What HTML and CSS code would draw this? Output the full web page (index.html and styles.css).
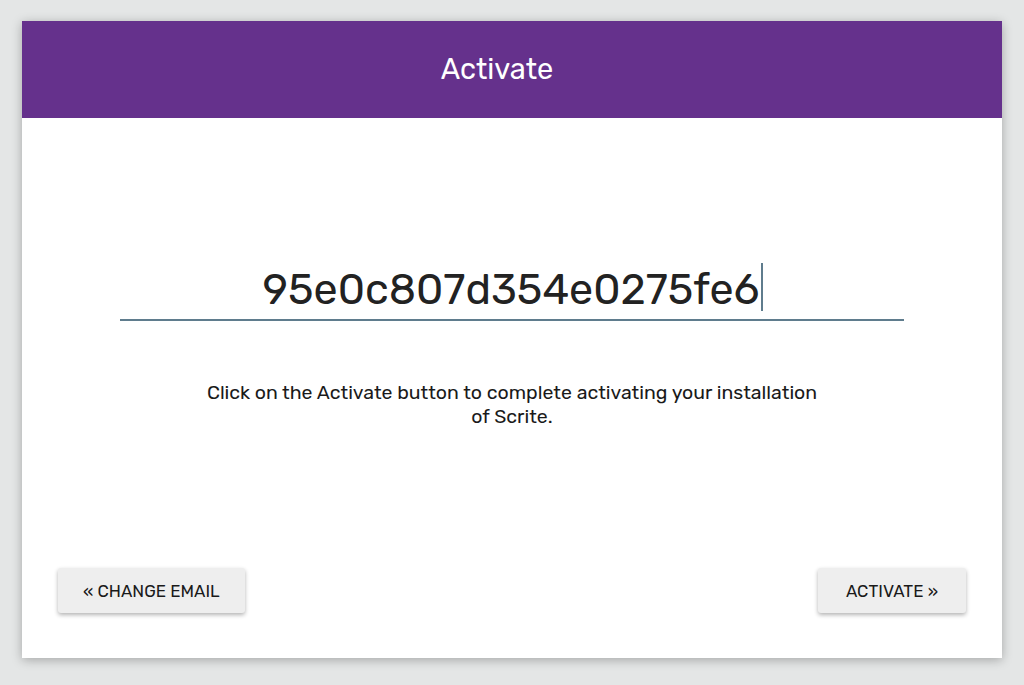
FILE: index.html
```html
<!DOCTYPE html>
<html>
<head>
<meta charset="utf-8">
<link rel="stylesheet" href="styles.css">
</head>
<body>
<div class="card">
  <div class="header">Activate</div>
  <div class="content">
    <div class="field">
      <span class="code">95e0c807d354e0275fe6</span><span class="caret"></span>
    </div>
    <p class="info">Click on the Activate button to complete activating your installation of Scrite.</p>
    <div class="actions">
      <button class="btn">« CHANGE EMAIL</button>
      <button class="btn btn-wide">ACTIVATE »</button>
    </div>
  </div>
</div>
</body>
</html>
```
FILE: styles.css
```css
html, body {
  margin: 0;
  padding: 0;
  width: 1024px;
  height: 685px;
  overflow: hidden;
  background: #e4e6e6;
  font-family: "Rubik", Roboto, "Noto Sans", sans-serif;
}
.card {
  position: relative;
  margin: 21px 0 0 22px;
  width: 980px;
  height: 637px;
  background: #ffffff;
  box-shadow: 0 2px 10px rgba(0, 0, 0, 0.28);
  display: flex;
  flex-direction: column;
}
.header {
  height: 97px;
  background: #65318c;
  color: #ffffff;
  font-size: 29px;
  display: flex;
  align-items: center;
  justify-content: center;
  padding: 0 30px 2px 0;
  box-sizing: border-box;
}
.content {
  flex: 1;
  display: flex;
  flex-direction: column;
  align-items: center;
  padding: 142px 36px 45px;
}
.field {
  width: 784px;
  border-bottom: 2px solid #5f7c8d;
  display: flex;
  justify-content: center;
  align-items: center;
  height: 58px;
  padding-bottom: 1px;
  box-sizing: content-box;
}
.code {
  font-size: 43px;
  color: #222222;
  letter-spacing: 0;
  margin-left: 2px;
}
.caret {
  width: 2px;
  height: 48px;
  background: #5f7c8d;
  margin: 0 0 4px 2px;
}
.info {
  width: 626px;
  margin: 60px 0 0;
  text-align: center;
  font-size: 19.5px;
  line-height: 24px;
  color: #1a1a1a;
}
.actions {
  margin-top: auto;
  align-self: stretch;
  display: flex;
  justify-content: space-between;
}
.btn {
  height: 45px;
  padding: 0 25px;
  border: none;
  border-radius: 3px;
  background: #eeeeee;
  box-shadow: 0 2px 4px rgba(0, 0, 0, 0.3);
  font-family: inherit;
  font-size: 17px;
  color: #1a1a1a;
}
.btn-wide {
  padding: 0 28px;
}
```
